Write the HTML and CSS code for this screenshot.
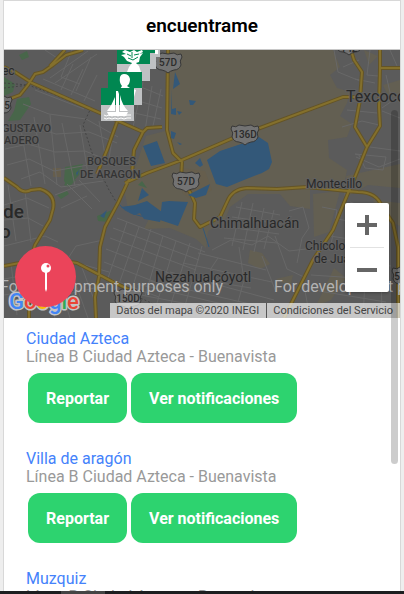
FILE: index.html
```html
<!DOCTYPE html>
<html lang="es">
<head>
<meta charset="utf-8">
<meta name="viewport" content="width=device-width, initial-scale=1">
<title>encuentrame</title>
<link rel="stylesheet" href="styles.css">
</head>
<body>
<div class="app">
  <header class="toolbar"><h1>encuentrame</h1></header>

  <section class="map" aria-label="Mapa">
    <svg class="map-canvas" viewBox="4 50 396 268" preserveAspectRatio="xMidYMid slice">
      <defs>
        <g id="shield"><path d="M-13-8Q-9-6-6-9Q0-7 6-9Q9-6 13-8L14-5Q11-1 13 3Q11 8 6 8Q2 9 0 11Q-2 9-6 8Q-11 8-13 3Q-11-1-14-5Z"/></g>
      </defs>
      <rect class="urban" x="4" y="50" width="396" height="268"/>
      <path class="land" d="M168 50H333L340 67L330 75L337 88L350 92L347 103L340 116L352 124L347 137L328 140L329 158L347 170L345 180L310 187V209L290 206L280 194L248 194L230 207L225 220L208 231L206 248L196 239L170 228L144 229L150 217L128 208L124 190L136 166L146 136L165 131Z"/>
      <path class="land" d="M346 176L400 164V188L368 185L350 195ZM364 50L378 56L369 65ZM383 85L400 80V98L388 96ZM313 194L340 191L329 232L314 237ZM250 250L262 253L270 264L260 269L248 263ZM373 200L400 203V226L381 217ZM334 268L346 278L331 300L316 306ZM276 279L293 275L290 287Z"/>
      <path class="patch" d="M53 168H61V177H53ZM180 168L205 171L212 190L194 201L183 194Z"/>
      <path class="park" d="M19 55L27 51L29 57L22 60ZM4 77L15 84L13 92L4 96ZM17 99L29 97L31 104L20 120L8 121L14 111ZM65 167L83 164L80 174L68 187L64 181ZM57 195L67 191L69 194L61 199ZM67 180H76L69 187L64 185ZM97 216L112 210L109 222L98 221ZM138 185L142 181L147 188Z"/>
      <g class="streets">
        <path d="M50 78L88 51M55 83L97 54M35 90L84 109M43 79L95 101M61 90L73 64M71 95L83 69M84 101L97 75M23 104L49 114L86 119L118 137M4 133L33 127L56 134L89 132L117 143M5 149L28 144L55 152L85 151L110 161M7 165L29 159L54 171L94 164M20 124L31 186M34 117L45 184M50 115L57 185M62 123L75 186M80 125L88 174M99 121L105 155M113 134L109 158M21 179L40 172L61 187L103 181M136 85L163 96M132 99L162 108M130 112L161 119M143 82L133 127M152 86L145 131M161 89L153 126M121 122L145 131M45 50L60 60M72 50L61 77L80 84M91 57L76 91"/>
        <path d="M4 205L27 198L49 208M4 220L28 218L43 226M8 185L16 241M25 191L31 242M4 246L45 236L58 242M55 195L83 184M61 208L87 196M67 184L92 209M79 180L100 202M4 279L38 273M4 295L35 290M11 263L17 315M43 271L55 318M54 267L70 318M67 260L88 318M81 265L95 302M34 302L94 288M76 246L103 240M76 246L67 260L109 272"/>
        <path d="M117 218L205 252M113 228L199 260M110 238L196 270M106 249L187 280M104 262L176 290M102 276L159 297M127 222L108 278M139 227L119 284M151 229L131 292M163 236L145 296M176 241L157 303M190 243L170 307M202 246L184 309M125 292L235 313M137 284L248 310M150 281L263 307M170 272L274 300M183 263L272 282M198 253L266 270"/>
        <path d="M236 207L280 215M232 217L281 224M228 227L279 234M224 238L277 243M242 202L232 246M253 203L243 250M264 208L254 252M274 210L264 249M212 250L231 240L252 245L268 236L289 251L306 249M218 258L210 270L221 283L251 288M275 236L287 269L306 278M239 247L244 280L238 302M262 256L276 292M289 211L303 207L309 228L302 238L297 263M303 280L310 318M322 207L337 210L330 251M350 202L358 205L350 249M338 219L380 228M330 236L389 245M315 259L391 266M311 275L387 280M319 291L386 302M369 205L363 318M380 214L382 318"/>
        <path d="M334 50L338 72L360 81M343 67L359 60M355 79L375 83M342 127L362 121L379 125M347 110L377 113M353 101L400 100M370 50L367 75L378 76M382 111L400 118M356 157L379 167L400 159M359 155L365 168L383 170L386 157L355 154ZM370 147L400 151M345 192L346 211L371 209M386 75L392 101L382 108M390 50L397 66"/>
      </g>
      <path class="rail" d="M4 83L28 85L53 94L90 110L83 125L94 159L109 190L118 205M103 276L127 292L158 306M4 88L29 85"/>
      <g class="road-edge">
        <path id="roads" d="M4 67L15 72L32 83L66 98L100 113L143 132L147 128L162 127M83 50L66 55L53 65L43 72L35 74L28 85L20 95L4 101M65 50L50 66M117 122L107 150L97 174M143 132L134 150L132 173L118 203L105 227L100 247L99 277L95 297L96 318M168 50L167 130L173 153L182 162L181 180L190 192L195 203L194 219L200 227L220 217L227 202Q232 189 247 188L277 189L307 187L358 192Q377 192 382 207L393 223L398 247V318M125 183L147 173L182 160L233 138L260 128L343 97H360M4 178L17 187Q23 194 31 190L40 189Q56 194 53 209L50 220L35 245L29 265V318M4 266L45 258L77 263L113 282L132 291M351 50L354 60L362 72L360 100L355 127L367 147L355 177L348 193L333 230L313 260L284 318M380 50V68L379 107L380 126L367 147M380 68H400"/>
      </g>
      <g class="road-fill"><use href="#roads"/></g>
      <g class="water">
        <path d="M143 146L157 141L165 163L151 166ZM175 72L180 84L173 89ZM172 89V109L176 108L176 115L171 114M189 100L196 101L193 105H190ZM177 111L182 112L179 115ZM171 131L176 133L174 139L171 138ZM177 142L182 144L180 145ZM207 160L220 151L244 143L259 137L268 143L272 162L269 169L262 173L244 180L227 187L216 184ZM200 158L203 165L200 167L195 163ZM210 184L206 195L196 198L188 195ZM142 188L149 195L138 201ZM121 207L135 205L147 201L162 212L160 222L144 219L140 213L134 215ZM162 202L169 201L188 202L178 226L160 220ZM100 216L107 210L104 218ZM76 173L79 170L77 176Z"/>
        <path class="canal" d="M120 205Q126 215 153 218M203 228L209 247"/>
      </g>
      <g class="shields">
        <use href="#shield" x="168" y="62"/><use href="#shield" x="186" y="181"/><use href="#shield" x="245" y="134"/><use href="#shield" x="349" y="44"/><use href="#shield" x="-2" y="105"/><use href="#shield" x="128" y="298"/><use href="#shield" x="406" y="276"/>
      </g>
      <g class="shield-text">
        <text x="168" y="66">57D</text><text x="186" y="185">57D</text><text x="245" y="138">136D</text><text x="128" y="302">150D</text><text x="349" y="52">142</text><text x="7" y="109">5</text><text x="397" y="280">5</text>
      </g>
      <g class="label small">
        <text x="2" y="132">GUSTAVO</text><text x="4" y="144">ADERO</text>
        <text x="87" y="165">BOSQUES</text><text x="80" y="178">DE ARAGON</text>
      </g>
      <g class="label town">
        <text x="306" y="188">Montecillo</text><text x="305" y="250">Chicoloapan</text><text x="314" y="263">de Juárez</text><text x="-2" y="75">tec</text>
      </g>
      <g class="label city">
        <text x="210" y="228">Chimalhuacán</text><text x="155" y="282">Nezahualcóyotl</text>
      </g>
      <text class="label texcoco" x="346" y="102">Texcoco</text>
      <g class="label capital"><text x="3" y="218">de</text><text x="0" y="238">o</text></g>
      <g class="watermark"><text x="223" y="292" text-anchor="end">For development purposes only</text><text x="274" y="292">For development purposes only</text></g>
      <g class="stations">
        <path fill="#bfc1c3" d="M150 50H160V57H156V69H150Z"/><path fill="#008751" d="M150 50H155V53H150Z"/><path fill="#fff" d="M155 50H158V54H155Z"/>
        <path fill="#008751" d="M117 48H150V64H117Z"/><path fill="#bfc1c3" d="M117 64H150V81H117Z"/>
        <path fill="#fff" d="M125 50L130 52L134 50L137 52L142 50L143 52L139 54L143 53L140 57L139 62L136 63L139 66L141 72H127L129 67L132 63L127 61L124 57L121 55L126 54L122 52Z"/>
        <path stroke="#008751" stroke-width="1" fill="none" d="M127 54L131 56M134 55L139 54M128 58L133 60L138 57M132 52V58"/>
        <path fill="#008751" d="M108 72H142V88H108Z"/><path fill="#bfc1c3" d="M108 88H142V105H108Z"/>
        <path fill="#fff" d="M124 74Q129 74 130 79Q130 84 127 86L130 88L136 90L134 97H120V89L122 86Q119 83 120 77Q121 74 124 74"/>
        <path fill="#008751" d="M101 88H134V105H101Z"/><path fill="#bfc1c3" d="M101 105H134V121H101Z"/>
        <path fill="#fff" d="M116 91H118L119 94V112H116ZM115 97V111H107Q112 105 115 97ZM120 95Q122 105 128 111H120ZM107 112H128L126 116H109Z"/>
        <path class="waves" d="M104 115Q106 117 109 115Q112 117 115 115Q118 117 121 115Q124 117 127 115L131 115M104 118Q106 120 109 118Q112 120 115 118Q118 120 121 118Q124 120 127 118L131 118"/>
      </g>
      <text class="google" x="9" y="309"><tspan fill="#4285f4">G</tspan><tspan fill="#ea4335">o</tspan><tspan fill="#fbbc05">o</tspan><tspan fill="#4285f4">g</tspan><tspan fill="#34a853">l</tspan><tspan fill="#ea4335">e</tspan></text>
    </svg>

    <div class="zoom">
      <button type="button" aria-label="Acercar"><svg viewBox="0 0 20 20"><path d="M8 0H12V8H20V12H12V20H8V12H0V8H8Z"/></svg></button>
      <button type="button" aria-label="Alejar"><svg viewBox="0 0 20 20"><path d="M0 8H20V12H0Z"/></svg></button>
    </div>
    <div class="credits"><span>Datos del mapa ©2020 INEGI</span><a href="#">Condiciones del Servicio</a></div>
    <button class="locate" type="button" aria-label="Mi ubicación">
      <svg viewBox="0 0 12 30"><circle cx="6" cy="6" r="5"/><path d="M5 10H7V27L6 30L5 27Z"/><circle class="shine" cx="8" cy="4" r="1.5"/></svg>
    </button>
  </section>

  <main class="stations-list">
    <article class="station">
      <h2>Ciudad Azteca</h2><p>Línea B Ciudad Azteca - Buenavista</p>
      <div class="actions"><button type="button">Reportar</button><button type="button">Ver notificaciones</button></div>
    </article>
    <article class="station">
      <h2>Villa de aragón</h2><p>Línea B Ciudad Azteca - Buenavista</p>
      <div class="actions"><button type="button">Reportar</button><button type="button">Ver notificaciones</button></div>
    </article>
    <article class="station">
      <h2>Muzquiz</h2><p>Línea B Ciudad Azteca - Buenavista</p>
      <div class="actions"><button type="button">Reportar</button><button type="button">Ver notificaciones</button></div>
    </article>
  </main>
  <div class="scroll-thumb"></div>
</div>
<div class="dock"></div>
</body>
</html>
```
FILE: styles.css
```css
* { box-sizing: border-box; }

body {
  margin: 0;
  height: 100vh;
  display: flex;
  flex-direction: column;
  overflow: hidden;
  background: #eee;
  font-family: Roboto, "Liberation Sans", sans-serif;
}

button { font: inherit; border: 0; padding: 0; cursor: pointer; }

.app {
  position: relative;
  flex: 1;
  min-height: 0;
  margin: 0 3px;
  border: 1px solid #d8d8d8;
  border-bottom: 0;
  background: #fff;
  overflow: hidden;
}

.toolbar {
  height: 49px;
  display: flex;
  align-items: center;
  justify-content: center;
  border-bottom: 1px solid #c8c8c8;
}

.toolbar h1 { margin: 0; padding-top: 2px; font-size: 19px; line-height: 24px; font-weight: 600; color: #000; }

/* Map */
.map { position: relative; height: 268px; overflow: hidden; }
.map-canvas { display: block; width: 100%; height: 100%; }

.urban { fill: #5b5b5b; }
.land { fill: #635f52; }
.patch { fill: #665e4d; }
.park { fill: #48664a; }
.streets { fill: none; stroke: #686868; stroke-width: 1; }
.rail { fill: none; stroke: #444; stroke-width: 1; stroke-dasharray: 2 2; }
.road-edge, .road-fill { fill: none; stroke-linejoin: round; }
.road-edge { stroke: #645426; stroke-width: 4; }
.road-fill { stroke: #84702c; stroke-width: 2; }
.water { fill: #335879; }
.canal { fill: none; stroke: #335879; stroke-width: 1; }
.shields { fill: #737373; stroke: #383838; stroke-width: 1; }
.shield-text { font-size: 10px; font-weight: 500; fill: #2b2b2b; text-anchor: middle; }
.label { fill: #292929; stroke: #606060; stroke-width: 2; paint-order: stroke; }
.small { font-size: 11px; font-weight: 500; fill: #343434; }
.town { font-size: 12px; }
.city { font-size: 14px; }
.texcoco { font-size: 16px; }
.capital { font-size: 19px; font-weight: 500; }
.watermark { font-size: 16px; fill: #b3b3b3; }
.waves { fill: none; stroke: #fff; stroke-width: 1; }
.google { font-size: 22px; font-weight: 500; stroke: #c4c4c4; stroke-width: 3; stroke-linejoin: round; paint-order: stroke; }

.zoom {
  position: absolute;
  right: 11px;
  bottom: 26px;
  width: 44px;
  padding: 0 5px;
  background: #fff;
  border-radius: 2px;
  box-shadow: 0 1px 3px rgba(0, 0, 0, .3);
}

.zoom button { display: flex; align-items: center; justify-content: center; width: 100%; height: 44px; background: none; }
.zoom button + button { height: 45px; border-top: 1px solid #e2e2e2; }
.zoom svg { width: 20px; height: 20px; fill: #666; }

.credits {
  position: absolute;
  right: 0;
  bottom: 0;
  display: flex;
  height: 15px;
  background: rgba(245, 245, 245, .7);
  font-size: 11px;
  line-height: 15px;
  color: #444;
}

.credits span, .credits a { padding: 0 7px 0 6px; color: inherit; text-decoration: none; white-space: nowrap; }
.credits a { border-left: 1px solid #555; }

.locate {
  position: absolute;
  left: 11px;
  bottom: 11px;
  display: flex;
  align-items: center;
  justify-content: center;
  width: 61px;
  height: 61px;
  border-radius: 50%;
  background: #eb445a;
}

.locate svg { width: 12px; height: 30px; fill: #fff; }
.locate .shine { fill: #eb445a; }

/* Station list */
.stations-list { padding: 12px 22px 0; }
.station { height: 120px; }
.station h2, .station p { margin: 0; font-size: 16px; line-height: 18px; font-weight: 400; }
.station h2 { color: #4482fb; }
.station p { color: #999; }

.actions { display: flex; gap: 4px; padding: 7px 2px 0; }

.actions button {
  height: 50px;
  padding: 0 18px;
  border-radius: 12px;
  background: #2dd36f;
  color: #fff;
  font-size: 16px;
  font-weight: 700;
}

.scroll-thumb {
  position: absolute;
  top: 18.5%;
  right: 2px;
  width: 7px;
  height: 60%;
  border-radius: 4px;
  background: rgba(0, 0, 0, .2);
}

.dock { height: 3px; background: linear-gradient(90deg, #1d1e20 61px, #444 61px, #444 105px, #1d1e20 105px); }
```
